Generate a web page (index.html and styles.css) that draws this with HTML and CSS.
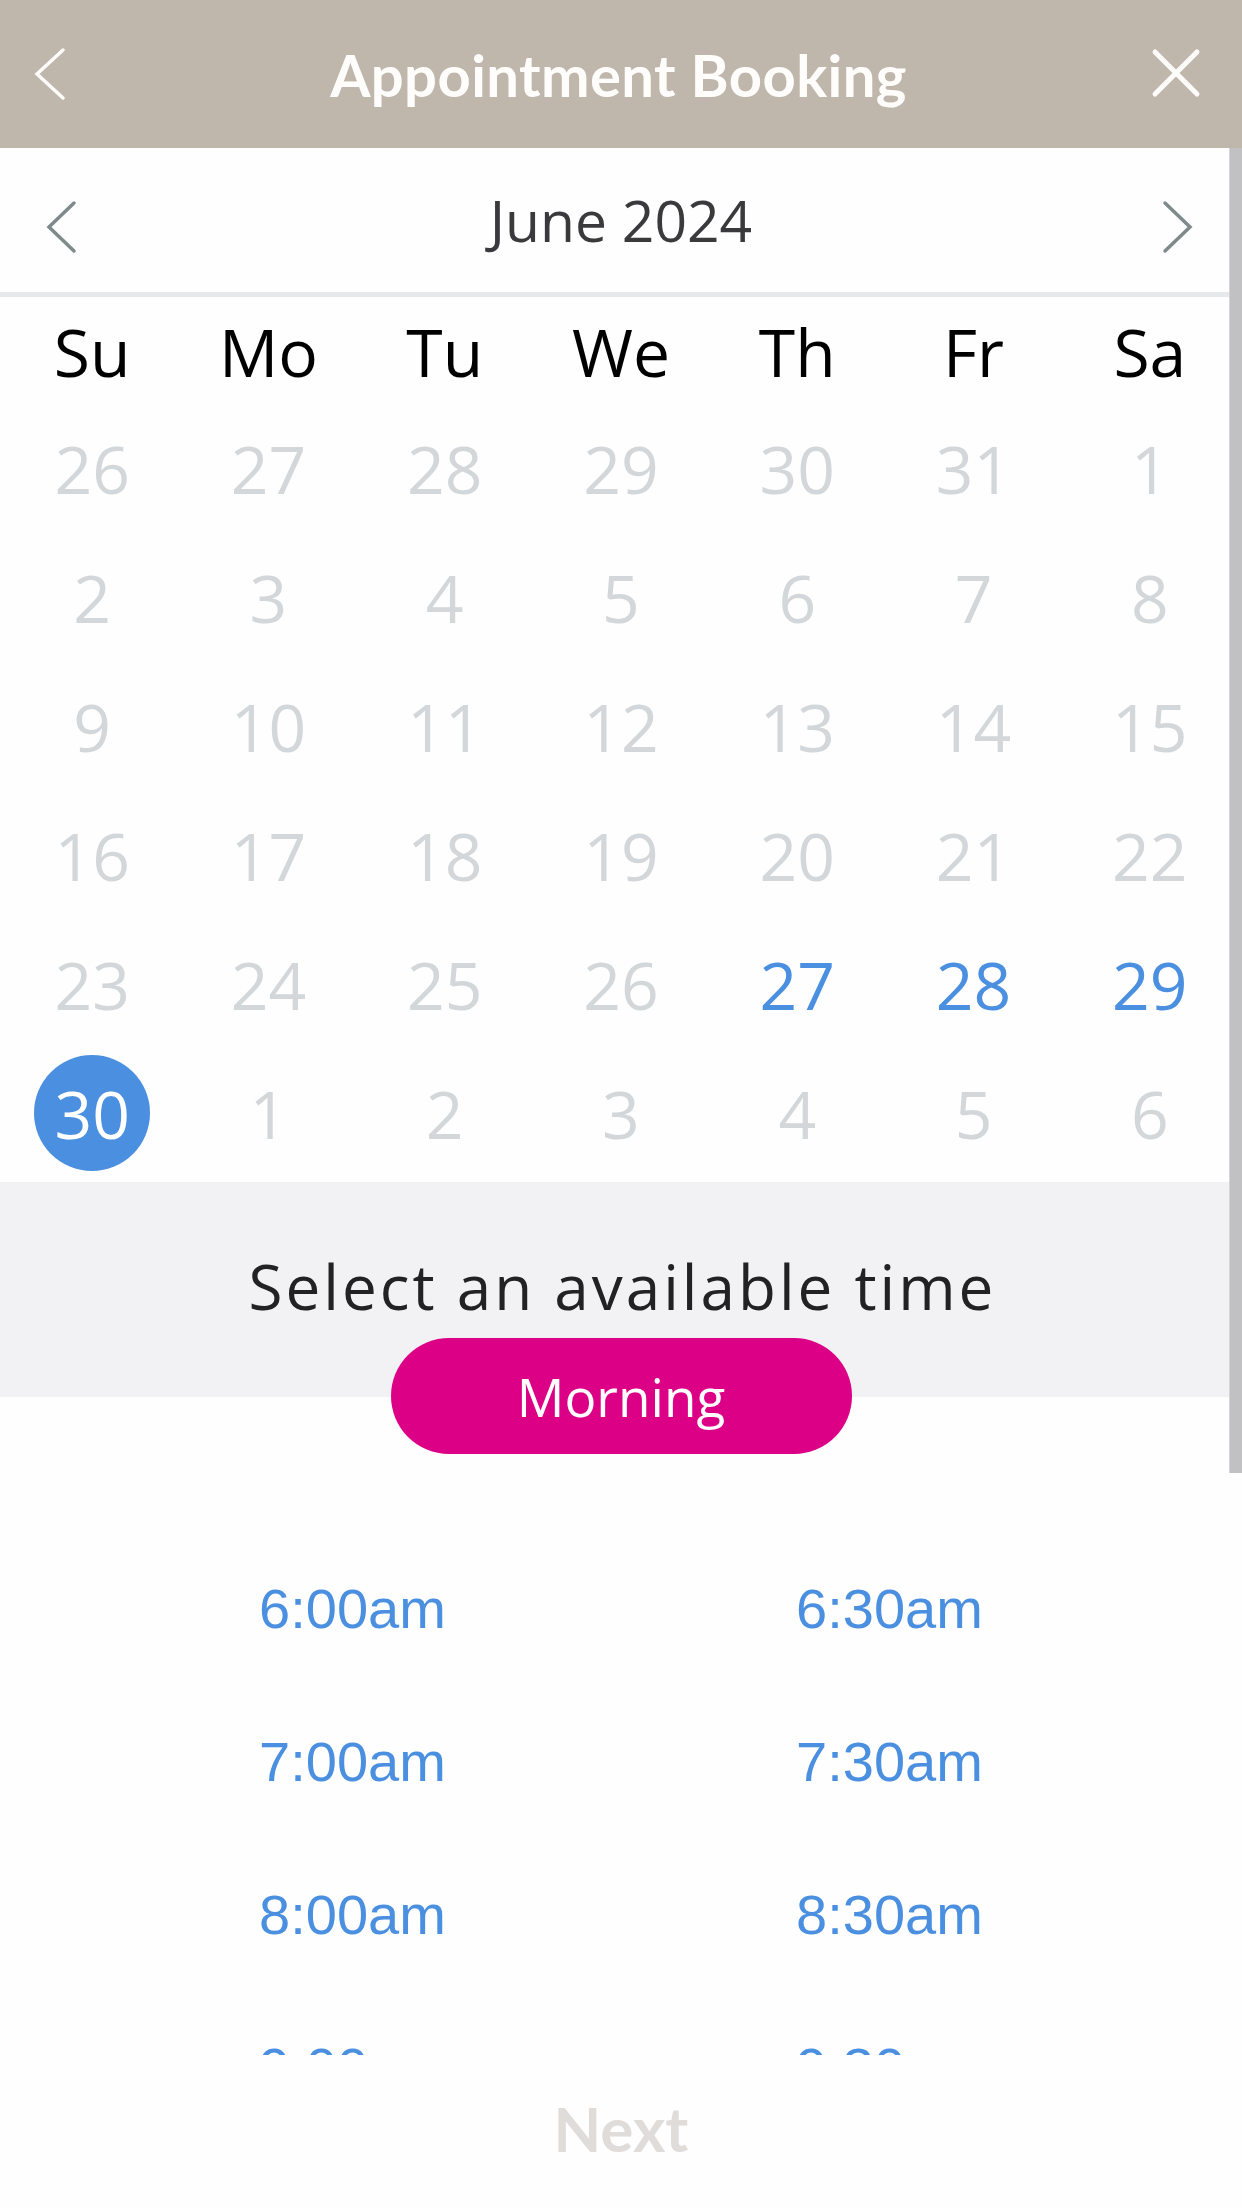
FILE: index.html
```html
<!DOCTYPE html>
<html lang="en">
  <head>
    <meta charset="UTF-8" />
    <meta name="viewport" content="width=device-width, initial-scale=1.0" />
    <title>Appointment Booking</title>
    <link rel="stylesheet" href="styles.css">
  </head>
  <body>
    <div class="header">
      <svg class="back" width="32" height="54" viewBox="0 0 32 54">
        <polyline points="29,3 3,27 29,51" />
      </svg>
      <h1>Appointment Booking</h1>
      <svg class="close" width="54" height="54" viewBox="0 0 54 54">
        <line x1="6" y1="5" x2="48" y2="47" />
        <line x1="48" y1="5" x2="6" y2="47" />
      </svg>
    </div>

    <div class="month">
      <svg class="arrow" width="32" height="54" viewBox="0 0 32 54">
        <polyline points="28,3 3,27 28,51" />
      </svg>
      <h2>June 2024</h2>
      <svg class="arrow right" width="32" height="54" viewBox="0 0 32 54">
        <polyline points="4,3 29,27 4,51" />
      </svg>
    </div>

    <div class="calendar">
      <div class="weekdays">
        <span>Su</span><span>Mo</span><span>Tu</span><span>We</span><span>Th</span><span>Fr</span><span>Sa</span>
      </div>
      <div class="days">
        <span class="off">26</span><span class="off">27</span><span class="off">28</span><span class="off">29</span><span class="off">30</span><span class="off">31</span><span class="off">1</span>
        <span class="off">2</span><span class="off">3</span><span class="off">4</span><span class="off">5</span><span class="off">6</span><span class="off">7</span><span class="off">8</span>
        <span class="off">9</span><span class="off">10</span><span class="off">11</span><span class="off">12</span><span class="off">13</span><span class="off">14</span><span class="off">15</span>
        <span class="off">16</span><span class="off">17</span><span class="off">18</span><span class="off">19</span><span class="off">20</span><span class="off">21</span><span class="off">22</span>
        <span class="off">23</span><span class="off">24</span><span class="off">25</span><span class="off">26</span><span class="open">27</span><span class="open">28</span><span class="open">29</span>
        <span class="selected"><b>30</b></span><span class="off">1</span><span class="off">2</span><span class="off">3</span><span class="off">4</span><span class="off">5</span><span class="off">6</span>
      </div>
    </div>

    <div class="time-head">
      <h3>Select an available time</h3>
    </div>
    <div class="period">
      <button>Morning</button>
    </div>

    <div class="slots">
      <div class="slot-grid">
        <a href="#">6:00am</a><a href="#">6:30am</a>
        <a href="#">7:00am</a><a href="#">7:30am</a>
        <a href="#">8:00am</a><a href="#">8:30am</a>
        <a href="#">9:00am</a><a href="#">9:30am</a>
      </div>
    </div>

    <div class="footer">
      <button class="next" disabled>Next</button>
    </div>

    <div class="scrollbar"></div>
  </body>
</html>
```

FILE: styles.css
```css
body {
  margin: 0;
  width: 1242px;
  height: 2208px;
  overflow: hidden;
  position: relative;
  font-family: "Open Sans", Arial, sans-serif;
  background: #fefefe;
}
.header {
  height: 148px;
  background-color: #bfb6ac;
  display: grid;
  grid-template-columns: 1fr auto 1fr;
  align-items: center;
  padding: 0 39px 0 34px;
}
.header h1 {
  margin: 0;
  font-family: Lato, "Open Sans", sans-serif;
  font-weight: 700;
  font-size: 58px;
  color: #fffdfb;
  letter-spacing: 0.4px;
}
.header svg {
  fill: none;
  stroke: #fffdfb;
  stroke-linecap: round;
}
.back {
  stroke-width: 3.5;
}
.close {
  justify-self: end;
  stroke-width: 5;
}
.month {
  height: 144px;
  border-bottom: 5px solid #e7e8ea;
  display: grid;
  grid-template-columns: 1fr auto 1fr;
  align-items: center;
  padding: 0 46px;
}
.month h2 {
  margin: 0;
  font-weight: 400;
  font-size: 57px;
  color: #3a3a3c;
}
.arrow {
  margin-top: 14px;
  fill: none;
  stroke: #7f8b8b;
  stroke-width: 3.5;
  stroke-linecap: round;
}
.arrow.right {
  justify-self: end;
  margin-right: 3px;
}
.calendar {
  background: #fefefe;
  padding: 0 4px 5px;
}
.weekdays,
.days {
  display: grid;
  grid-template-columns: repeat(7, 1fr);
  text-align: center;
}
.weekdays span {
  height: 106px;
  line-height: 108px;
  font-size: 66px;
  color: #000;
}
.days span {
  height: 129px;
  display: flex;
  align-items: center;
  justify-content: center;
  font-size: 66px;
}
.days .off {
  color: #d3d7d9;
}
.days .open {
  color: #4a8fe0;
}
.days .selected b {
  width: 116px;
  height: 116px;
  border-radius: 50%;
  background: #4a8fe0;
  color: #fff;
  font-weight: 400;
  display: flex;
  align-items: center;
  justify-content: center;
}
.time-head {
  height: 215px;
  box-sizing: border-box;
  background: #f2f1f3;
  padding-top: 66px;
  text-align: center;
}
.time-head h3 {
  margin: 0 0 0 3px;
  line-height: 76px;
  font-weight: 400;
  font-size: 62px;
  letter-spacing: 3px;
  color: #222224;
}
.period {
  margin-top: -59px;
  display: flex;
  justify-content: center;
}
.period button {
  width: 461px;
  height: 116px;
  border: none;
  border-radius: 58px;
  background: #dc0086;
  color: #fff;
  font-family: "Open Sans", sans-serif;
  font-size: 53px;
  padding: 0;
}
.slots {
  height: 601px;
  box-sizing: border-box;
  padding: 78px 84px 0;
  overflow: hidden;
}
.slot-grid {
  display: grid;
  grid-template-columns: 1fr 1fr;
  grid-auto-rows: 153px;
  align-items: center;
  text-align: center;
}
.slot-grid a {
  font-family: "Liberation Sans", Arial, sans-serif;
  font-size: 56px;
  color: #4a8fe0;
  text-decoration: none;
}
.footer {
  height: 153px;
  box-sizing: border-box;
  padding-bottom: 8px;
  display: flex;
  align-items: center;
  justify-content: center;
}
.next {
  border: none;
  background: none;
  font-family: Lato, "Open Sans", sans-serif;
  font-weight: 700;
  font-size: 62px;
  color: #dfdcd9;
  padding: 0;
}
.scrollbar {
  position: absolute;
  top: 148px;
  right: 0;
  width: 12px;
  height: 1325px;
  background: #c1c0c3;
  border-left: 1px solid #d4d3d6;
}
```
